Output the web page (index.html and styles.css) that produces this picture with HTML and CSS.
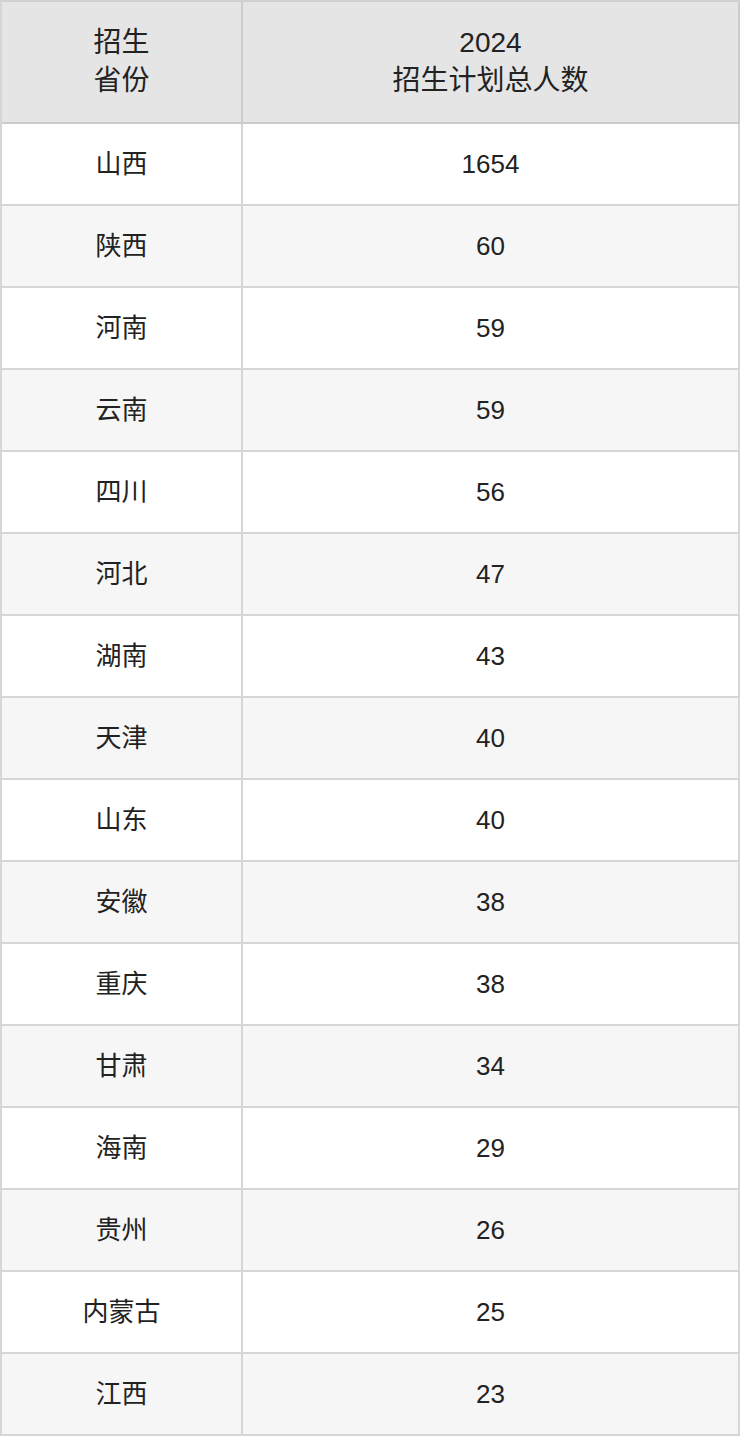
FILE: index.html
```html
<!DOCTYPE html>
<html lang="zh">
<head>
<meta charset="utf-8">
<link rel="stylesheet" href="styles.css">
</head>
<body>
<table class="plan">
  <thead>
    <tr><th class="c1">招生<br>省份</th><th class="c2">2024<br>招生计划总人数</th></tr>
  </thead>
  <tbody>
    <tr><td>山西</td><td>1654</td></tr>
    <tr><td>陕西</td><td>60</td></tr>
    <tr><td>河南</td><td>59</td></tr>
    <tr><td>云南</td><td>59</td></tr>
    <tr><td>四川</td><td>56</td></tr>
    <tr><td>河北</td><td>47</td></tr>
    <tr><td>湖南</td><td>43</td></tr>
    <tr><td>天津</td><td>40</td></tr>
    <tr><td>山东</td><td>40</td></tr>
    <tr><td>安徽</td><td>38</td></tr>
    <tr><td>重庆</td><td>38</td></tr>
    <tr><td>甘肃</td><td>34</td></tr>
    <tr><td>海南</td><td>29</td></tr>
    <tr><td>贵州</td><td>26</td></tr>
    <tr><td>内蒙古</td><td>25</td></tr>
    <tr><td>江西</td><td>23</td></tr>
  </tbody>
</table>
</body>
</html>
```

FILE: styles.css
```css
html, body {
  margin: 0;
  padding: 0;
  background: #ffffff;
}
.plan {
  border-collapse: separate;
  border-spacing: 0;
  width: 740px;
  table-layout: fixed;
  font-family: "Liberation Sans", "Noto Sans CJK SC", sans-serif;
  font-size: 26px;
  color: #222222;
  border-top: 2px solid #d0d0d0;
  border-left: 2px solid #d6d6d6;
}
.plan th, .plan td {
  text-align: center;
  vertical-align: middle;
  border-right: 2px solid #d6d6d6;
  border-bottom: 2px solid #d6d6d6;
  padding: 0;
  font-weight: normal;
}
.plan th {
  height: 120px;
  line-height: 38px;
  font-size: 28px;
  background: #e5e5e5;
  border-color: #cccccc;
}
.plan .c1 { width: 239px; }
.plan td {
  height: 80px;
  line-height: 40px;
}
.plan tbody tr:nth-child(even) td {
  background: #f6f6f6;
}
```
